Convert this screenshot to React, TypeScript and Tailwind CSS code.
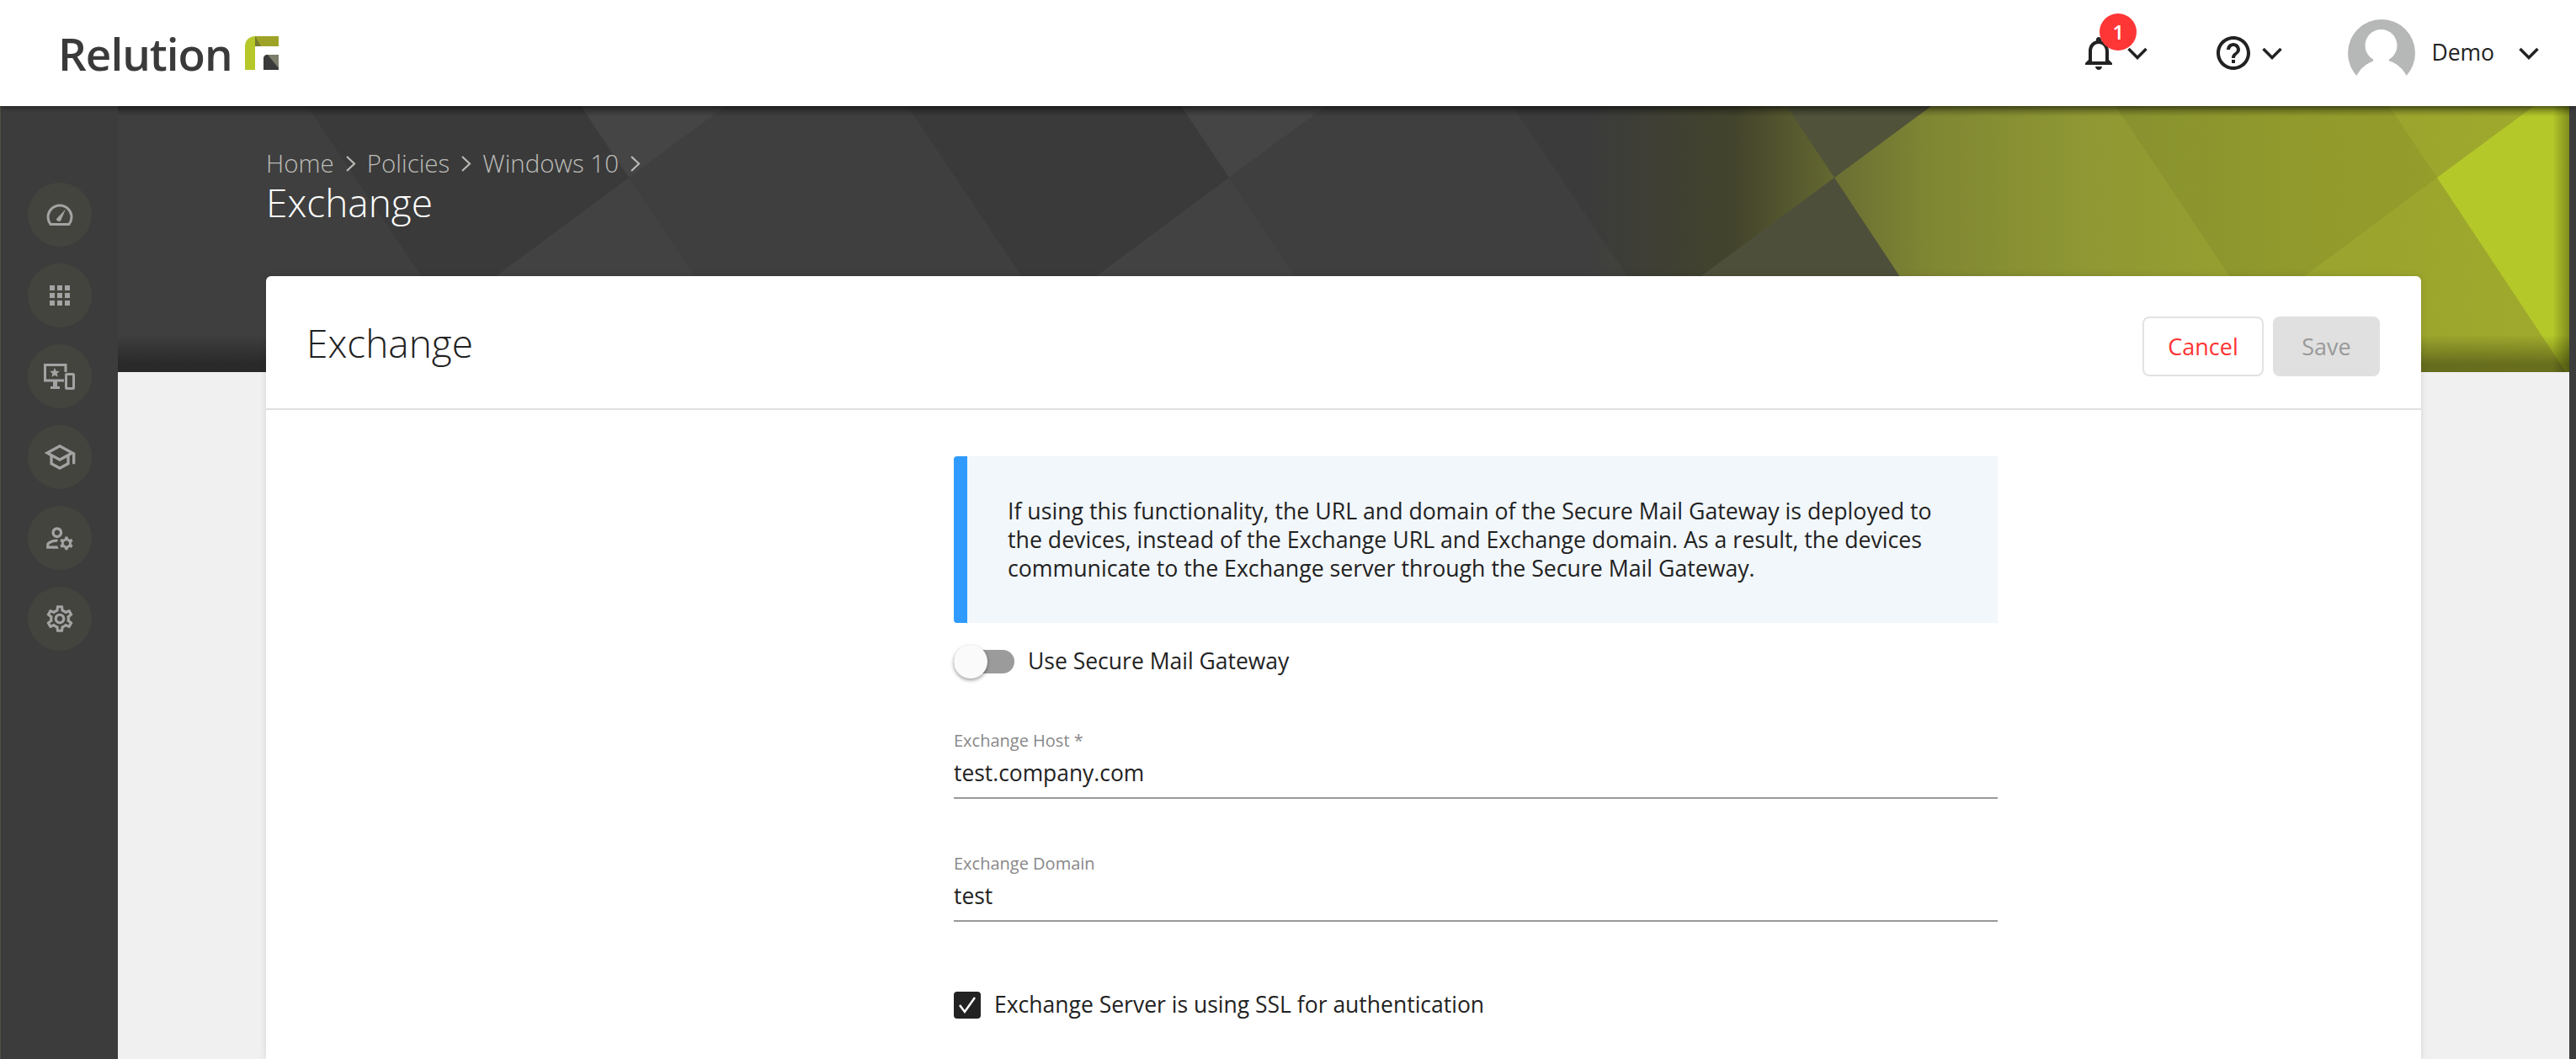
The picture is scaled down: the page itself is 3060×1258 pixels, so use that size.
import { MdApps, MdHelpOutline, MdNotificationsNone, MdOutlineManageAccounts, MdOutlineSchool, MdOutlineSettings } from "react-icons/md";

function Gauge() {
  return (
    <svg width="32" height="26" viewBox="0 0 32 26" fill="none" stroke="#a3a3a3" strokeWidth="3">
      <path d="M5 24.5h22c1.6-2.4 3-5 3-8.5C30 8.3 23.700 2 16 2S2 8.300 2 16c0 3.500 1.400 6.100 3 8.500z" strokeLinejoin="round" />
      <path d="M12.500 17.500 23 6.500l-6 14c-1.500 1-3.200.6-4.200-.4s-1-1.800-.3-2.600z" fill="#a3a3a3" stroke="none" />
    </svg>
  );
}

function Devices() {
  return (
    <svg width="37" height="31" viewBox="0 0 37 31" fill="none">
      <path d="M26 10V1.500H1.500V20H24" stroke="#a3a3a3" strokeWidth="3" />
      <path d="m13 5 1.700 3.700 4 .4-3 2.700.9 4-3.600-2.100-3.600 2.100.9-4-3-2.700 4-.4z" fill="#a3a3a3" />
      <path d="M11 21h5v6h3v3H8v-3h3z" fill="#a3a3a3" />
      <rect x="26.500" y="12.500" width="9" height="17" rx="1" stroke="#a3a3a3" strokeWidth="3" />
    </svg>
  );
}

function LogoMark() {
  return (
    <svg width="40" height="40" viewBox="0 0 40 40">
      <path d="M0 40V12C0 5 5 0 12 0v40z" fill="#b5c729" />
      <path d="M12 0h28v12H12z" fill="#9ea327" />
      <path d="M12 0l7 12h-7z" fill="#757c2c" />
      <path d="M26 22h14v18H22V26c0-2 2-4 4-4z" fill="#3a3a3a" />
      <path d="M27 22h13v16z" fill="#7d7d6c" />
    </svg>
  );
}

function Avatar() {
  return (
    <svg width="80" height="80" viewBox="0 0 80 80">
      <circle cx="40" cy="40" r="40" fill="#b6b8b7" />
      <circle cx="39.500" cy="31" r="19" fill="#fff" />
      <ellipse cx="40" cy="85" rx="34" ry="37" fill="#fff" />
      <rect x="30" y="44" width="19" height="8" fill="#fff" />
    </svg>
  );
}

function Chevron() {
  return (
    <svg width="24" height="15" viewBox="0 0 24 15" fill="none" stroke="#222222" strokeWidth="3.500">
      <path d="M1.500 2 12 12.500 22.500 2" />
    </svg>
  );
}

function Crumb({ label }: { label: string }) {
  return (
    <>
      <span>{label}</span>
      <svg width="13" height="19" viewBox="0 0 13 19" fill="none" stroke="#b9b9b4" strokeWidth="2.200" className="mx-[13px]">
        <path d="m2 1 9 8.500L2 18" />
      </svg>
    </>
  );
}

// the faceted background of the banner, in page x minus the sidebar
const tiles = [
  { a: 550, dark: 0.08, top: "#ffffff", topOp: 0.03, low: "#ffffff", lowOp: 0.02 },
  { a: 1263, dark: 0.08, top: "#ffffff", topOp: 0.03, low: "#ffffff", lowOp: 0.02 },
  { a: 1982, dark: 0.05, top: "#50523a", topOp: 1, low: "#4e4f3a", lowOp: 1 },
  { a: 2698, dark: 0.05, top: "#000000", topOp: 0, low: "#000000", lowOp: 0 },
];

function BannerArt() {
  return (
    <svg className="absolute inset-0" width="2912" height="316" viewBox="0 0 2912 316">
      <defs>
        <linearGradient id="base" gradientUnits="userSpaceOnUse" x1="0" y1="0" x2="2912" y2="0">
          <stop offset="0.6" stopColor="#3f3f3f" />
          <stop offset="0.66" stopColor="#47482f" />
          <stop offset="0.7" stopColor="#6a6e33" />
          <stop offset="0.74" stopColor="#808733" />
          <stop offset="0.8" stopColor="#8e9733" />
          <stop offset="0.88" stopColor="#98a22f" />
          <stop offset="1" stopColor="#a0aa2c" />
        </linearGradient>
        <linearGradient id="bottom" x1="0" y1="0" x2="0" y2="1">
          <stop offset="0.86" stopColor="#000" stopOpacity="0" />
          <stop offset="0.97" stopColor="#000" stopOpacity="0.35" />
        </linearGradient>
        <linearGradient id="top" x1="0" y1="0" x2="0" y2="1">
          <stop offset="0" stopColor="#000" stopOpacity="0.35" />
          <stop offset="0.04" stopColor="#000" stopOpacity="0" />
        </linearGradient>
        <linearGradient id="edge" x1="0" y1="0" x2="1" y2="0">
          <stop offset="0" stopColor="#000" stopOpacity="0" />
          <stop offset="1" stopColor="#000" stopOpacity="0.3" />
        </linearGradient>
      </defs>
      <rect width="2912" height="316" fill="url(#base)" />
      {tiles.map((t) => (
        <g key={t.a}>
          <polygon points={`${t.a - 325},0 ${t.a},0 ${t.a + 57},85 ${t.a - 160},246`} fill="#000" fillOpacity={t.dark} />
          <polygon points={`${t.a},0 ${t.a + 172},0 ${t.a + 57},85`} fill={t.top} fillOpacity={t.topOp} />
          <polygon points={`${t.a + 57},85 ${t.a + 210},316 ${t.a - 255},316`} fill={t.low} fillOpacity={t.lowOp} />
        </g>
      ))}
      <polygon points="2870,0 2912,0 2912,316 2908,316 2755,85" fill="#b5c82a" />
      <rect width="2912" height="316" fill="url(#bottom)" />
      <rect width="2912" height="316" fill="url(#top)" />
      <rect x="2892" width="20" height="316" fill="url(#edge)" />
    </svg>
  );
}

const navIcons = [
  <Gauge key="gauge" />,
  <MdApps key="apps" size={36} color="#a3a3a3" />,
  <Devices key="devices" />,
  <MdOutlineSchool key="school" size={40} color="#a3a3a3" />,
  <MdOutlineManageAccounts key="accounts" size={38} color="#a3a3a3" />,
  <MdOutlineSettings key="settings" size={38} color="#a3a3a3" />,
];

export default function App() {
  return (
    <div className="flex h-[1258px] flex-col overflow-hidden bg-[#f0f0f0] font-['Open_Sans',sans-serif] text-[#222222]">
      <header className="z-10 flex h-[126px] shrink-0 items-center justify-between bg-white pl-[69px] pr-[44px] shadow-[0_2px_6px_rgba(0,0,0,0.4)]">
        <div className="flex items-center gap-[15px]">
          <span className="text-[53px] font-semibold leading-none tracking-[-1px] text-[#3a3a3a]">Relution</span>
          <LogoMark />
        </div>
        <div className="flex items-center">
          <div className="relative flex items-center">
            <MdNotificationsNone size={48} color="#222222" />
            <span className="absolute left-[25px] top-[-23px] flex h-[44px] w-[44px] items-center justify-center rounded-full bg-[#ff3636] text-[24px] font-semibold text-white">1</span>
            <div className="ml-[10px]">
              <Chevron />
            </div>
          </div>
          <div className="ml-[78px] flex items-center">
            <MdHelpOutline size={48} color="#222222" />
            <div className="ml-[10px]">
              <Chevron />
            </div>
          </div>
          <div className="ml-[78px] flex items-center">
            <Avatar />
            <span className="ml-[19px] text-[26.500px]">Demo</span>
            <div className="ml-[29px]">
              <Chevron />
            </div>
          </div>
        </div>
      </header>

      <div className="flex min-h-0 flex-1">
        <aside className="flex w-[140px] shrink-0 flex-col items-center gap-[20px] border-l-[1px] border-[#4f5240] bg-[#3c3c3c] pt-[91px]">
          {navIcons.map((icon, i) => (
            <div key={i} className="flex h-[76px] w-[76px] items-center justify-center rounded-full bg-[#44443e]">
              {icon}
            </div>
          ))}
        </aside>

        <main className="min-w-0 flex-1">
          <div className="relative h-[316px] overflow-hidden">
            <BannerArt />
            <div className="relative pl-[176px] pt-[48px]">
              <div className="flex h-[40px] items-center text-[29.500px] font-light text-[#bcbcb8]">
                <Crumb label="Home" />
                <Crumb label="Policies" />
                <Crumb label="Windows 10" />
              </div>
              <h1 className="mt-[-4px] text-[46px] font-light leading-[60px] text-white">Exchange</h1>
            </div>
          </div>

          <div className="relative mx-[176px] mt-[-114px] h-[930px] rounded-t-[6px] bg-white shadow-[0_0_8px_rgba(0,0,0,0.12)]">
            <div className="flex h-[159px] items-center justify-between border-b-[2px] border-[#e0e0e0] pl-[48px] pr-[49px]">
              <h2 className="mt-[2px] text-[46px] font-light">Exchange</h2>
              <div className="mt-[10px] flex items-center gap-[11px]">
                <button className="h-[71px] w-[144px] rounded-[8px] border-[2px] border-[#e2e2e2] bg-white pt-[2px] text-[27px] text-[#ff3333]">Cancel</button>
                <button className="h-[71px] w-[127px] rounded-[8px] bg-[#e0e0e0] pt-[2px] text-[27px] text-[#999999]">Save</button>
              </div>
            </div>

            <div className="ml-[817px] w-[1240px] pt-[55px]">
              <div className="flex h-[198px] items-center rounded-l-[4px] border-l-[16px] border-[#2f9bff] bg-[#f2f7fb] pl-[48px] text-[26.700px] leading-[34px]">
                <p>
                  If using this functionality, the URL and domain of the Secure Mail Gateway is deployed to
                  <br />
                  the devices, instead of the Exchange URL and Exchange domain. As a result, the devices
                  <br />
                  communicate to the Exchange server through the Secure Mail Gateway.
                </p>
              </div>

              <div className="mt-[26px] flex items-center">
                <div className="relative h-[28px] w-[72px] rounded-full bg-[#9b9b9b]">
                  <span className="absolute left-0 top-[-6px] h-[40px] w-[40px] rounded-full bg-[#fafafa] shadow-[0_2px_4px_rgba(0,0,0,0.4)]" />
                </div>
                <span className="ml-[16px] text-[26.500px]">Use Secure Mail Gateway</span>
              </div>

              <div className="mt-[60px]">
                <div className="text-[20px] leading-[28px] text-[#888888]">Exchange Host *</div>
                <div className="h-[55px] border-b-[2px] border-[#999999] pt-[6px] text-[26.400px] leading-[36px]">test.company.com</div>
              </div>

              <div className="mt-[63px]">
                <div className="text-[20px] leading-[28px] text-[#888888]">Exchange Domain</div>
                <div className="h-[55px] border-b-[2px] border-[#999999] pt-[6px] text-[26.400px] leading-[36px]">test</div>
              </div>

              <div className="mt-[79px] flex items-center">
                <span className="flex h-[32px] w-[32px] items-center justify-center rounded-[4px] bg-[#222222]">
                  <svg width="24" height="22" viewBox="0 0 24 22" fill="none" stroke="#fff" strokeWidth="2.500">
                    <path d="m3 11 6 8L21 2" />
                  </svg>
                </span>
                <span className="ml-[16px] text-[26.500px]">Exchange Server is using SSL for authentication</span>
              </div>
            </div>
          </div>
        </main>

        <div className="w-[8px] shrink-0 bg-[#3c3c3c]" />
      </div>
    </div>
  );
}
